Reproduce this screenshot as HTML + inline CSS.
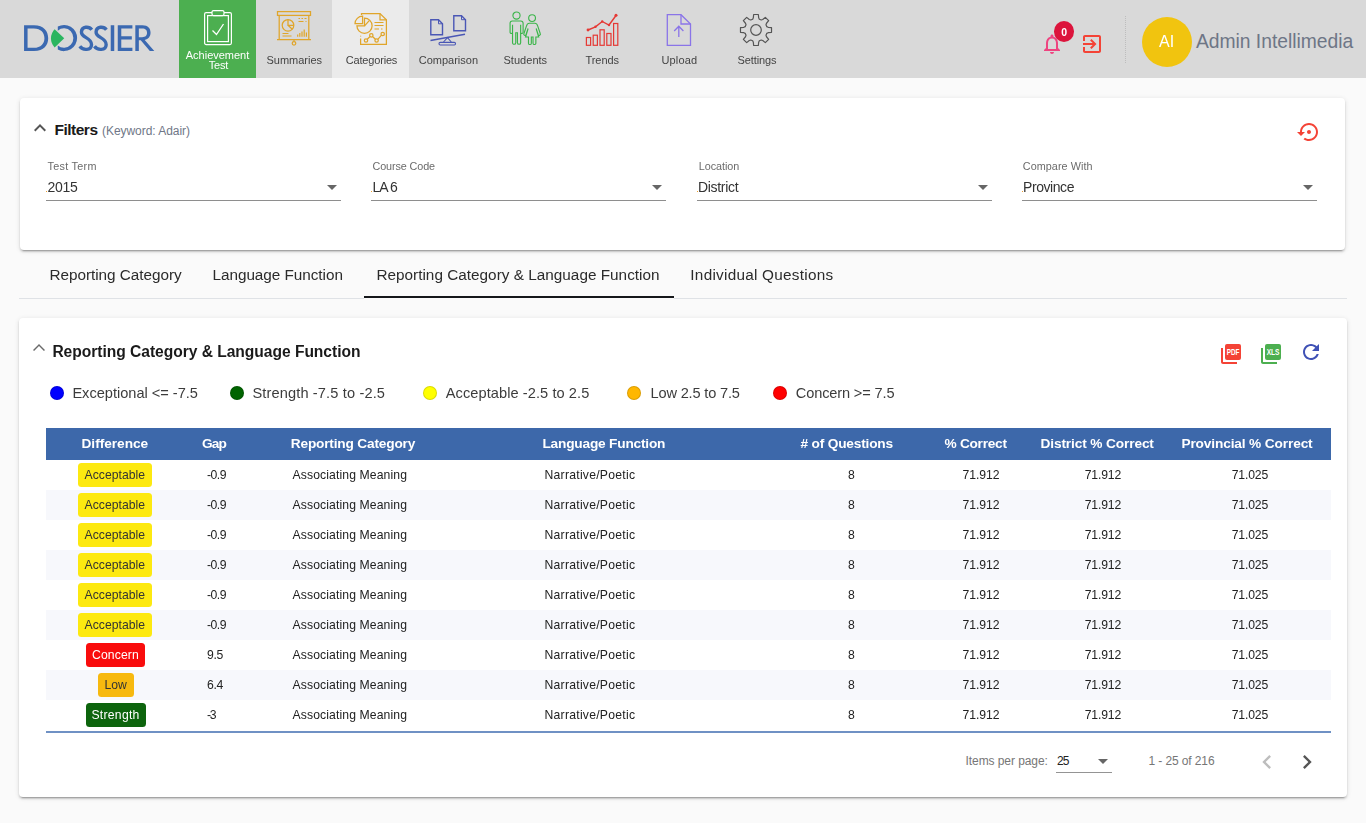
<!DOCTYPE html>
<html>
<head>
<meta charset="utf-8">
<title>Dossier</title>
<style>
*{box-sizing:border-box;margin:0;padding:0}
html,body{width:1366px;height:823px;overflow:hidden}
body{background:#fafafa;font-family:"Liberation Sans",sans-serif;color:#222;position:relative}
.abs{position:absolute}
.t{position:absolute;white-space:nowrap;line-height:1;filter:grayscale(1)}
.lcd{filter:none}
#nav{position:absolute;left:0;top:0;width:1366px;height:78px;background:#d9d9d9}
.tile{position:absolute;top:0;width:77px;height:78px}
.tile svg{position:absolute}
.card{position:absolute;background:#fff;border-radius:4px;box-shadow:0 3px 1px -2px rgba(0,0,0,.2),0 2px 2px 0 rgba(0,0,0,.14),0 1px 5px 0 rgba(0,0,0,.12)}
.fline{position:absolute;height:1px;background:#8e8e8e;width:295px;top:200px}
.farrow{position:absolute;width:0;height:0;border-left:5px solid transparent;border-right:5px solid transparent;border-top:5px solid #666;top:184.5px}
.row{position:absolute;left:46px;width:1285px;height:30px}
.row.alt{background:#f7f8fc}
.badge{position:absolute;height:24px;border-radius:3.5px}
.dot{position:absolute;width:14.5px;height:14.5px;border-radius:50%;top:385.9px;border:1px solid rgba(0,0,0,.14)}
</style>
</head>
<body>
<div id="nav">
<svg class="abs" style="left:10px;top:10px" width="160" height="60" viewBox="0 0 1366 512">
<g fill="#3b69b1">
<path fill-rule="evenodd" d="M120,130 L205,130 C290,130 326,182 326,240 C326,298 290,350 205,350 L120,350 Z M150,158 L150,322 L203,322 C265,322 294,285 294,240 C294,195 265,158 203,158 Z"/>
<rect x="860" y="130" width="30" height="220"/>
<path d="M920,130 H1045 V158 H950 V224 H1040 V252 H950 V322 H1045 V350 H920 Z"/>
<path fill-rule="evenodd" d="M1070,130 H1130 C1180,130 1200,160 1200,193 C1200,226 1182,250 1150,256 L1232,350 H1194 L1116,258 H1100 V350 H1070 Z M1100,157 V232 H1128 C1158,232 1170,215 1170,194 C1170,172 1158,157 1128,157 Z"/>
</g>
<g fill="none" stroke="#3b69b1" stroke-width="29">
<path d="M698,168 C676,138 612,136 610,188 C608,240 698,232 696,296 C694,346 622,348 596,310"/>
<path d="M823,168 C801,138 737,136 735,188 C733,240 823,232 821,296 C819,346 747,348 721,310"/>
</g>
<path fill="#3b69b1" d="M408,140.3 A112,112 0 1 1 408,337.7 L408,301.9 A80,84 0 1 0 408,176.1 Z"/>
<path fill="#2bb560" d="M463,242 L381,164 A113,113 0 0 0 381,320 Z"/>
</svg>
<div class="abs" style="left:332px;top:0;width:77px;height:78px;background:#ebebeb"></div>
<div class="tile" style="left:179px;background:#4caf50;"><svg style="left:24px;top:9px" width="30" height="37" viewBox="0 0 30 37" fill="none" stroke="#fff" stroke-width="1.2"><rect x="1.6" y="3.6" width="26.8" height="32" rx="1.5"/><rect x="4.6" y="6.6" width="20.8" height="26"/><rect x="9" y="1.6" width="12" height="5" rx="1.5" fill="#4caf50"/><path d="M9.5,21.5 L13.5,25.5 L20.5,15" stroke-width="1.3"/></svg></div>
<div class="tile" style="left:256px;"><svg style="left:19.5px;top:10px" width="36" height="36" viewBox="0 0 36 36" fill="none" stroke="#e0a52a" stroke-width="1.25"><rect x="1.5" y="1.6" width="33" height="3.8"/><path d="M3.2,5.4 V29.6 M32.8,5.4 V29.6 M1,29.6 H35 M18,29.6 V31.5"/><circle cx="18" cy="33.3" r="1.8"/><circle cx="12" cy="15.3" r="5.8"/><path d="M12,9.5 V15.3 H17.8 M12,15.3 L16.3,19.2"/><path d="M22.5,8.5 H24 M25.5,8.5 H27 M28.5,8.5 H30.5 M22.5,11.5 H27.5 M29.5,11.5 H30.5 M6.5,23.5 H12.5 M6.5,26 H15.5 M21.7,26.8 V24.5 M23.8,26.8 V23 M26,26.8 V21.5 M28.2,26.8 V19.5 M30.4,26.8 V22.5" stroke-width="1.2"/></svg></div>
<div class="tile" style="left:333px;"><svg style="left:20px;top:11px" width="36" height="36" viewBox="0 0 36 36" fill="none" stroke="#e0a52a" stroke-width="1.25"><path d="M8.5,4 V2.6 H27 L33.4,8.8 V33.4 H7.6 V27.5 M7.6,25.5 V24.8"/><path d="M27,2.6 V8.8 H33.4"/><path d="M9.6,5.2 V12.7 H2 A7.6,7.6 0 0 1 9.6,5.2 Z"/><path d="M11.5,7.2 A7.6,7.6 0 1 1 3.9,14.8 H11.5 Z"/><path d="M11.5,14.8 L16.5,9.3"/><path d="M21.5,11.5 H30.5 M21.5,14.5 H30.5 M21.5,18 H26 M28,18 H29.5" stroke-width="1.2"/><circle cx="13" cy="29.5" r="1.7"/><circle cx="18.3" cy="24.3" r="1.7"/><circle cx="23.6" cy="29.5" r="1.7"/><circle cx="29.7" cy="23" r="1.7"/><path d="M14.2,28.3 L17.1,25.5 M19.5,25.5 L22.4,28.3 M24.8,28.3 L28.5,24.2"/></svg></div>
<div class="tile" style="left:410px;"><svg style="left:18px;top:13px" width="40" height="34" viewBox="0 0 40 34" fill="none" stroke="#4a57b5" stroke-width="1.4"><path d="M2.8,6.8 H10.5 L14.5,10.8 V21.8 H2.8 Z"/><path d="M10.5,6.8 V10.8 H14.5" stroke-width="1"/><path d="M25.8,2.7 H33.5 L37.5,6.7 V17.7 H25.8 Z"/><path d="M33.5,2.7 V6.7 H37.5" stroke-width="1"/><path d="M2.5,27.5 L37,21.2"/><path d="M15.5,29 L19.5,24.6 L23.3,29" stroke-width="1.1"/><rect x="11" y="29.4" width="16.5" height="2.6" rx="1.2" stroke-width="1.1"/></svg></div>
<div class="tile" style="left:487px;"><svg style="left:20.8px;top:11.3px" width="34" height="35" viewBox="0 0 36 37" fill="none" stroke="#3bb54a" stroke-width="1.2"><circle cx="9" cy="4.8" r="3.8"/><path d="M4.5,10.5 H13.5 A2.5,2.5 0 0 1 16,13 V22.5 A1.3,1.3 0 0 1 13.4,22.5 V14.5 V33.5 A1.7,1.7 0 0 1 10,33.5 V23 H8.2 V33.5 A1.7,1.7 0 0 1 4.8,33.5 V14.5 V22.5 A1.3,1.3 0 0 1 2.2,22.5 V13 A2.5,2.5 0 0 1 4.5,10.5 Z"/><circle cx="25.5" cy="7.5" r="3.6"/><path d="M22.5,13 H28.5 C30.5,13 31,14.5 31.5,16 L34.2,24 A1.2,1.2 0 0 1 32,25 L29.8,18.5 L32.5,27.5 H29.5 V34 A1.5,1.5 0 0 1 26.5,34 V27.5 H24.7 V34 A1.5,1.5 0 0 1 21.7,34 V27.5 H18.6 L21.3,18.5 L19,25 A1.2,1.2 0 0 1 16.8,24 L19.5,16 C20,14.5 20.5,13 22.5,13 Z"/></svg></div>
<div class="tile" style="left:564px;"><svg style="left:20px;top:12px" width="36" height="35" viewBox="0 0 36 35" fill="none" stroke="#e53935" stroke-width="1.2"><rect x="2.4" y="25.5" width="4.2" height="7.8"/><rect x="9.2" y="23.2" width="4.2" height="10.1"/><rect x="16" y="17.8" width="4.2" height="15.5"/><rect x="22.8" y="21.5" width="4.2" height="11.8"/><rect x="29.6" y="11.5" width="4.2" height="21.8"/><path d="M4,18 L11.5,14.8 L18.2,9.5 L25,13 L32,3.5" stroke-width="1.4"/><g fill="#e53935" stroke="none"><circle cx="4" cy="18" r="1.4"/><circle cx="11.5" cy="14.8" r="1.2"/><circle cx="18.2" cy="9.5" r="1.2"/><circle cx="25" cy="13" r="1.2"/><circle cx="32" cy="3.3" r="1.5"/></g></svg></div>
<div class="tile" style="left:641px;"><svg style="left:24px;top:12px" width="28" height="36" viewBox="0 0 28 36" fill="none" stroke="#8a74e8" stroke-width="1.3"><path d="M2.3,2.7 H16 L25.5,12 V33.3 H2.3 Z"/><path d="M16,2.7 V12 H25.5"/><path d="M13.8,25 V14.5 M9.2,19 L13.8,14.3 L18.4,19"/></svg></div>
<div class="tile" style="left:718px;"><svg style="left:20px;top:12px" width="36" height="36" viewBox="0 0 36 36" fill="none" stroke="#555" stroke-width="1.2" stroke-linejoin="round"><path d="M14.66,7.20 L15.33,5.79 L15.65,2.48 L20.35,2.48 L20.67,5.79 L21.34,7.20 L23.27,8.01 L24.75,7.48 L27.32,5.36 L30.64,8.68 L28.52,11.25 L27.99,12.73 L28.80,14.66 L30.21,15.33 L33.52,15.65 L33.52,20.35 L30.21,20.67 L28.80,21.34 L27.99,23.27 L28.52,24.75 L30.64,27.32 L27.32,30.64 L24.75,28.52 L23.27,27.99 L21.34,28.80 L20.67,30.21 L20.35,33.52 L15.65,33.52 L15.33,30.21 L14.66,28.80 L12.73,27.99 L11.25,28.52 L8.68,30.64 L5.36,27.32 L7.48,24.75 L8.01,23.27 L7.20,21.34 L5.79,20.67 L2.48,20.35 L2.48,15.65 L5.79,15.33 L7.20,14.66 L8.01,12.73 L7.48,11.25 L5.36,8.68 L8.68,5.36 L11.25,7.48 L12.73,8.01 Z"/><circle cx="18" cy="18" r="5.3"/></svg></div>
<div class="t" style="left:185.80px;top:49.99px;font-size:11px;color:#fff;letter-spacing:-0.010px;">Achievement</div>
<div class="t" style="left:208.75px;top:60.09px;font-size:11px;color:#fff;letter-spacing:-0.217px;">Test</div>
<div class="t" style="left:266.50px;top:54.69px;font-size:11px;color:#444;letter-spacing:-0.013px;">Summaries</div>
<div class="t" style="left:345.75px;top:54.69px;font-size:11px;color:#444;letter-spacing:-0.178px;">Categories</div>
<div class="t" style="left:418.75px;top:54.69px;font-size:11px;color:#444;letter-spacing:-0.006px;">Comparison</div>
<div class="t" style="left:503.50px;top:54.69px;font-size:11px;color:#444;letter-spacing:0.029px;">Students</div>
<div class="t" style="left:585.50px;top:54.69px;font-size:11px;color:#444;letter-spacing:-0.070px;">Trends</div>
<div class="t" style="left:661.40px;top:54.69px;font-size:11px;color:#444;letter-spacing:0.190px;">Upload</div>
<div class="t" style="left:737.50px;top:54.69px;font-size:11px;color:#444;letter-spacing:-0.107px;">Settings</div>
<svg class="abs" style="left:1040.3px;top:32.1px" width="24" height="24" viewBox="0 0 24 24" fill="#ee4480"><path d="M12 22c1.100 0 2-.9 2-2h-4c0 1.100.9 2 2 2zm6-6v-5c0-3.070-1.630-5.640-4.500-6.320V4c0-.830-.670-1.500-1.500-1.500s-1.500.670-1.500 1.500v.680C7.640 5.360 6 7.920 6 11v5l-2 2v1h16v-1l-2-2zm-2 1H8v-6c0-2.480 1.510-4.500 4-4.500s4 2.020 4 4.500v6z"/></svg>
<div class="abs" style="left:1054px;top:21px;width:20px;height:20.5px;border-radius:50%;background:#dc143c"></div>
<div class="t" style="left:1061.20px;top:27.01px;font-size:10.5px;color:#fff;letter-spacing:0.000px;font-weight:bold;">0</div>
<svg class="abs" style="left:1080.3px;top:31.9px" width="24" height="24" viewBox="0 0 24 24" fill="#f44336"><path d="M10.09 15.59L11.5 17l5-5-5-5-1.41 1.41L12.67 11H3v2h9.670l-2.580 2.590zM19 3H5c-1.110 0-2 .9-2 2v4h2V5h14v14H5v-4H3v4c0 1.100.890 2 2 2h14c1.100 0 2-.9 2-2V5c0-1.100-.9-2-2-2z"/></svg>
<div class="abs" style="left:1124.5px;top:16px;width:0;height:47px;border-left:1px dotted #bdbdbd"></div>
<div class="abs" style="left:1142px;top:17px;width:50px;height:50px;border-radius:50%;background:#f1c40f"></div>
<div class="t" style="left:1159.04px;top:34.16px;font-size:16px;color:#fff;letter-spacing:0.100px;">AI</div>
<div class="t lcd" style="left:1195.88px;top:32.16px;font-size:19.3px;color:#6e7686;letter-spacing:-0.006px;">Admin Intellimedia</div>
</div>
<div class="card" style="left:20px;top:98px;width:1325px;height:152px"></div>
<svg class="abs" style="left:28px;top:116px" width="24" height="24" viewBox="0 0 24 24" fill="#555"><path d="M12 8l-6 6 1.410 1.410L12 10.830l4.590 4.580L18 14z"/></svg>
<div class="t lcd" style="left:54.40px;top:121.68px;font-size:15.5px;color:#1a1a1a;letter-spacing:-0.483px;font-weight:bold;">Filters</div>
<div class="t lcd" style="left:102.00px;top:124.64px;font-size:12px;color:#6f7787;letter-spacing:-0.047px;">(Keyword: Adair)</div>
<svg class="abs" style="left:1296.9px;top:119.9px" width="24" height="24" viewBox="0 0 24 24" fill="#f44336"><path d="M14,12c0-1.100-0.900-2-2-2s-2,0.900-2,2s0.900,2,2,2S14,13.100,14,12z M12,3c-4.970,0-9,4.030-9,9H0l4,4l4-4H5c0-3.870,3.130-7,7-7s7,3.130,7,7s-3.130,7-7,7c-1.510,0-2.910-0.490-4.060-1.300l-1.420,1.440C8.040,20.300,9.940,21,12,21c4.970,0,9-4.030,9-9S16.970,3,12,3z"/></svg>
<div class="t" style="left:47.50px;top:160.66px;font-size:10.8px;color:#6b6b6b;letter-spacing:0.300px;">Test Term</div>
<div class="t" style="left:47.40px;top:180.45px;font-size:14px;color:#333;letter-spacing:-0.250px;">2015</div>
<div class="fline" style="left:46px"></div><div class="farrow" style="left:326.9px"></div>
<div class="abs" style="left:46.3px;top:191px;width:1.2px;height:1.2px;background:#f0a030"></div>
<div class="t" style="left:372.50px;top:160.66px;font-size:10.8px;color:#6b6b6b;letter-spacing:-0.105px;">Course Code</div>
<div class="t" style="left:372.40px;top:180.45px;font-size:14px;color:#333;letter-spacing:-0.883px;">LA 6</div>
<div class="fline" style="left:371px"></div><div class="farrow" style="left:651.9px"></div>
<div class="abs" style="left:371.3px;top:191px;width:1.2px;height:1.2px;background:#f0a030"></div>
<div class="t" style="left:698.75px;top:160.66px;font-size:10.8px;color:#6b6b6b;letter-spacing:-0.050px;">Location</div>
<div class="t" style="left:698.00px;top:180.45px;font-size:14px;color:#333;letter-spacing:-0.321px;">District</div>
<div class="fline" style="left:697px"></div><div class="farrow" style="left:978.0px"></div>
<div class="abs" style="left:697.3px;top:191px;width:1.2px;height:1.2px;background:#f0a030"></div>
<div class="t" style="left:1022.80px;top:160.66px;font-size:10.8px;color:#6b6b6b;letter-spacing:0.068px;">Compare With</div>
<div class="t" style="left:1023.00px;top:180.45px;font-size:14px;color:#333;letter-spacing:-0.436px;">Province</div>
<div class="fline" style="left:1022px"></div><div class="farrow" style="left:1303.0px"></div>
<div class="abs" style="left:1022.3px;top:191px;width:1.2px;height:1.2px;background:#f0a030"></div>
<div class="abs" style="left:19px;top:298px;width:1328px;height:1px;background:#dfe2e6"></div>
<div class="t" style="left:49.50px;top:267.25px;font-size:15.3px;color:#2b2b2b;letter-spacing:-0.029px;">Reporting Category</div>
<div class="t" style="left:212.50px;top:267.25px;font-size:15.3px;color:#2b2b2b;letter-spacing:-0.037px;">Language Function</div>
<div class="t" style="left:376.40px;top:267.25px;font-size:15.3px;color:#2b2b2b;letter-spacing:0.022px;">Reporting Category &amp; Language Function</div>
<div class="t" style="left:690.35px;top:267.25px;font-size:15.3px;color:#2b2b2b;letter-spacing:0.263px;">Individual Questions</div>
<div class="abs" style="left:364px;top:296px;width:310px;height:3px;background:#fafafa"></div><div class="abs" style="left:364px;top:296px;width:310px;height:2px;background:#15171a"></div>
<div class="card" style="left:19px;top:318px;width:1328px;height:479px"></div>
<svg class="abs" style="left:27px;top:336px" width="24" height="24" viewBox="0 0 24 24" fill="#6a6a6a"><path d="M12 8l-6 6 1.060 1.060L12 10.120l4.940 4.940L18 14z"/></svg>
<div class="t" style="left:52.40px;top:344.19px;font-size:15.6px;color:#1a1a1a;letter-spacing:-0.032px;font-weight:bold;">Reporting Category &amp; Language Function</div>
<div class="dot" style="left:49.6px;background:#0000ff"></div><div class="t" style="left:72.40px;top:386.04px;font-size:14.6px;color:#3c3c3c;letter-spacing:-0.011px;">Exceptional &lt;= -7.5</div>
<div class="dot" style="left:229.8px;background:#006400"></div><div class="t" style="left:252.40px;top:386.04px;font-size:14.6px;color:#3c3c3c;letter-spacing:0.138px;">Strength -7.5 to -2.5</div>
<div class="dot" style="left:422.6px;background:#ffff00"></div><div class="t" style="left:445.75px;top:386.04px;font-size:14.6px;color:#3c3c3c;letter-spacing:0.074px;">Acceptable -2.5 to 2.5</div>
<div class="dot" style="left:626.5px;background:#ffb700"></div><div class="t" style="left:650.50px;top:386.04px;font-size:14.6px;color:#3c3c3c;letter-spacing:-0.169px;">Low 2.5 to 7.5</div>
<div class="dot" style="left:772.9px;background:#ff0000"></div><div class="t" style="left:795.80px;top:386.04px;font-size:14.6px;color:#3c3c3c;letter-spacing:-0.146px;">Concern &gt;= 7.5</div>
<svg class="abs" style="left:1219px;top:342px" width="24" height="24" viewBox="0 0 24 24"><path d="M4 6H2v14c0 1.100.9 2 2 2h14v-2H4V6z" fill="#f44336"/><rect x="6" y="2" width="16" height="16" rx="2" fill="#f44336"/><text x="14.1" y="13.100" font-family="Liberation Sans, sans-serif" font-weight="bold" font-size="8.8" fill="#fff" text-anchor="middle" textLength="12.800" lengthAdjust="spacingAndGlyphs">PDF</text></svg>
<svg class="abs" style="left:1259px;top:342px" width="24" height="24" viewBox="0 0 24 24"><path d="M4 6H2v14c0 1.100.9 2 2 2h14v-2H4V6z" fill="#4caf50"/><rect x="6" y="2" width="16" height="16" rx="2" fill="#4caf50"/><text x="14.1" y="13.100" font-family="Liberation Sans, sans-serif" font-weight="bold" font-size="8.8" fill="#fff" text-anchor="middle" textLength="12.800" lengthAdjust="spacingAndGlyphs">XLS</text></svg>
<svg class="abs" style="left:1299px;top:340px" width="24" height="24" viewBox="0 0 24 24" fill="#3f51b5"><path d="M17.650,6.350C16.200,4.900,14.210,4,12,4c-4.420,0-7.990,3.580-7.990,8s3.570,8,7.990,8c3.730,0,6.840-2.550,7.730-6h-2.080c-0.820,2.330-3.040,4-5.650,4c-3.310,0-6-2.690-6-6s2.690-6,6-6c1.660,0,3.140,0.690,4.220,1.780L13,11h7V4L17.650,6.350z"/></svg>
<div class="abs" style="left:46px;top:428px;width:1285.3px;height:32px;background:#3d68aa"></div>
<div class="t" style="left:81.50px;top:436.90px;font-size:13.7px;color:#fff;letter-spacing:-0.028px;font-weight:bold;">Difference</div>
<div class="t" style="left:202.00px;top:436.90px;font-size:13.7px;color:#fff;letter-spacing:-0.825px;font-weight:bold;">Gap</div>
<div class="t" style="left:290.75px;top:436.90px;font-size:13.7px;color:#fff;letter-spacing:-0.185px;font-weight:bold;">Reporting Category</div>
<div class="t" style="left:542.40px;top:436.90px;font-size:13.7px;color:#fff;letter-spacing:-0.197px;font-weight:bold;">Language Function</div>
<div class="t" style="left:800.50px;top:436.90px;font-size:13.7px;color:#fff;letter-spacing:-0.185px;font-weight:bold;"># of Questions</div>
<div class="t" style="left:944.50px;top:436.90px;font-size:13.7px;color:#fff;letter-spacing:-0.275px;font-weight:bold;">% Correct</div>
<div class="t" style="left:1040.50px;top:436.90px;font-size:13.7px;color:#fff;letter-spacing:-0.129px;font-weight:bold;">District % Correct</div>
<div class="t" style="left:1181.40px;top:436.90px;font-size:13.7px;color:#fff;letter-spacing:-0.137px;font-weight:bold;">Provincial % Correct</div>
<div class="badge" style="left:78px;top:463px;width:74px;background:#fde910"></div>
<div class="t" style="left:84.50px;top:468.67px;font-size:12.2px;color:#333;letter-spacing:0.028px;">Acceptable</div>
<div class="t" style="left:207.00px;top:468.67px;font-size:12.2px;color:#222;letter-spacing:-0.500px;">-0.9</div>
<div class="t" style="left:292.50px;top:468.67px;font-size:12.2px;color:#222;letter-spacing:0.111px;">Associating Meaning</div>
<div class="t" style="left:544.50px;top:468.67px;font-size:12.2px;color:#222;letter-spacing:0.253px;">Narrative/Poetic</div>
<div class="t" style="left:848.00px;top:468.67px;font-size:12.2px;color:#222;letter-spacing:0.000px;">8</div>
<div class="t" style="left:962.50px;top:468.67px;font-size:12.2px;color:#222;letter-spacing:-0.060px;">71.912</div>
<div class="t" style="left:1084.75px;top:468.67px;font-size:12.2px;color:#222;letter-spacing:-0.160px;">71.912</div>
<div class="t" style="left:1231.75px;top:468.67px;font-size:12.2px;color:#222;letter-spacing:-0.160px;">71.025</div>
<div class="row alt" style="top:490px"></div>
<div class="badge" style="left:78px;top:493px;width:74px;background:#fde910"></div>
<div class="t" style="left:84.50px;top:498.67px;font-size:12.2px;color:#333;letter-spacing:0.028px;">Acceptable</div>
<div class="t" style="left:207.00px;top:498.67px;font-size:12.2px;color:#222;letter-spacing:-0.500px;">-0.9</div>
<div class="t" style="left:292.50px;top:498.67px;font-size:12.2px;color:#222;letter-spacing:0.111px;">Associating Meaning</div>
<div class="t" style="left:544.50px;top:498.67px;font-size:12.2px;color:#222;letter-spacing:0.253px;">Narrative/Poetic</div>
<div class="t" style="left:848.00px;top:498.67px;font-size:12.2px;color:#222;letter-spacing:0.000px;">8</div>
<div class="t" style="left:962.50px;top:498.67px;font-size:12.2px;color:#222;letter-spacing:-0.060px;">71.912</div>
<div class="t" style="left:1084.75px;top:498.67px;font-size:12.2px;color:#222;letter-spacing:-0.160px;">71.912</div>
<div class="t" style="left:1231.75px;top:498.67px;font-size:12.2px;color:#222;letter-spacing:-0.160px;">71.025</div>
<div class="badge" style="left:78px;top:523px;width:74px;background:#fde910"></div>
<div class="t" style="left:84.50px;top:528.67px;font-size:12.2px;color:#333;letter-spacing:0.028px;">Acceptable</div>
<div class="t" style="left:207.00px;top:528.67px;font-size:12.2px;color:#222;letter-spacing:-0.500px;">-0.9</div>
<div class="t" style="left:292.50px;top:528.67px;font-size:12.2px;color:#222;letter-spacing:0.111px;">Associating Meaning</div>
<div class="t" style="left:544.50px;top:528.67px;font-size:12.2px;color:#222;letter-spacing:0.253px;">Narrative/Poetic</div>
<div class="t" style="left:848.00px;top:528.67px;font-size:12.2px;color:#222;letter-spacing:0.000px;">8</div>
<div class="t" style="left:962.50px;top:528.67px;font-size:12.2px;color:#222;letter-spacing:-0.060px;">71.912</div>
<div class="t" style="left:1084.75px;top:528.67px;font-size:12.2px;color:#222;letter-spacing:-0.160px;">71.912</div>
<div class="t" style="left:1231.75px;top:528.67px;font-size:12.2px;color:#222;letter-spacing:-0.160px;">71.025</div>
<div class="row alt" style="top:550px"></div>
<div class="badge" style="left:78px;top:553px;width:74px;background:#fde910"></div>
<div class="t" style="left:84.50px;top:558.67px;font-size:12.2px;color:#333;letter-spacing:0.028px;">Acceptable</div>
<div class="t" style="left:207.00px;top:558.67px;font-size:12.2px;color:#222;letter-spacing:-0.500px;">-0.9</div>
<div class="t" style="left:292.50px;top:558.67px;font-size:12.2px;color:#222;letter-spacing:0.111px;">Associating Meaning</div>
<div class="t" style="left:544.50px;top:558.67px;font-size:12.2px;color:#222;letter-spacing:0.253px;">Narrative/Poetic</div>
<div class="t" style="left:848.00px;top:558.67px;font-size:12.2px;color:#222;letter-spacing:0.000px;">8</div>
<div class="t" style="left:962.50px;top:558.67px;font-size:12.2px;color:#222;letter-spacing:-0.060px;">71.912</div>
<div class="t" style="left:1084.75px;top:558.67px;font-size:12.2px;color:#222;letter-spacing:-0.160px;">71.912</div>
<div class="t" style="left:1231.75px;top:558.67px;font-size:12.2px;color:#222;letter-spacing:-0.160px;">71.025</div>
<div class="badge" style="left:78px;top:583px;width:74px;background:#fde910"></div>
<div class="t" style="left:84.50px;top:588.67px;font-size:12.2px;color:#333;letter-spacing:0.028px;">Acceptable</div>
<div class="t" style="left:207.00px;top:588.67px;font-size:12.2px;color:#222;letter-spacing:-0.500px;">-0.9</div>
<div class="t" style="left:292.50px;top:588.67px;font-size:12.2px;color:#222;letter-spacing:0.111px;">Associating Meaning</div>
<div class="t" style="left:544.50px;top:588.67px;font-size:12.2px;color:#222;letter-spacing:0.253px;">Narrative/Poetic</div>
<div class="t" style="left:848.00px;top:588.67px;font-size:12.2px;color:#222;letter-spacing:0.000px;">8</div>
<div class="t" style="left:962.50px;top:588.67px;font-size:12.2px;color:#222;letter-spacing:-0.060px;">71.912</div>
<div class="t" style="left:1084.75px;top:588.67px;font-size:12.2px;color:#222;letter-spacing:-0.160px;">71.912</div>
<div class="t" style="left:1231.75px;top:588.67px;font-size:12.2px;color:#222;letter-spacing:-0.160px;">71.025</div>
<div class="row alt" style="top:610px"></div>
<div class="badge" style="left:78px;top:613px;width:74px;background:#fde910"></div>
<div class="t" style="left:84.50px;top:618.67px;font-size:12.2px;color:#333;letter-spacing:0.028px;">Acceptable</div>
<div class="t" style="left:207.00px;top:618.67px;font-size:12.2px;color:#222;letter-spacing:-0.500px;">-0.9</div>
<div class="t" style="left:292.50px;top:618.67px;font-size:12.2px;color:#222;letter-spacing:0.111px;">Associating Meaning</div>
<div class="t" style="left:544.50px;top:618.67px;font-size:12.2px;color:#222;letter-spacing:0.253px;">Narrative/Poetic</div>
<div class="t" style="left:848.00px;top:618.67px;font-size:12.2px;color:#222;letter-spacing:0.000px;">8</div>
<div class="t" style="left:962.50px;top:618.67px;font-size:12.2px;color:#222;letter-spacing:-0.060px;">71.912</div>
<div class="t" style="left:1084.75px;top:618.67px;font-size:12.2px;color:#222;letter-spacing:-0.160px;">71.912</div>
<div class="t" style="left:1231.75px;top:618.67px;font-size:12.2px;color:#222;letter-spacing:-0.160px;">71.025</div>
<div class="badge" style="left:86px;top:643px;width:59px;background:#f90d0d"></div>
<div class="t" style="left:92.00px;top:648.67px;font-size:12.2px;color:#fff;letter-spacing:0.108px;">Concern</div>
<div class="t" style="left:207.00px;top:648.67px;font-size:12.2px;color:#222;letter-spacing:-0.350px;">9.5</div>
<div class="t" style="left:292.50px;top:648.67px;font-size:12.2px;color:#222;letter-spacing:0.111px;">Associating Meaning</div>
<div class="t" style="left:544.50px;top:648.67px;font-size:12.2px;color:#222;letter-spacing:0.253px;">Narrative/Poetic</div>
<div class="t" style="left:848.00px;top:648.67px;font-size:12.2px;color:#222;letter-spacing:0.000px;">8</div>
<div class="t" style="left:962.50px;top:648.67px;font-size:12.2px;color:#222;letter-spacing:-0.060px;">71.912</div>
<div class="t" style="left:1084.75px;top:648.67px;font-size:12.2px;color:#222;letter-spacing:-0.160px;">71.912</div>
<div class="t" style="left:1231.75px;top:648.67px;font-size:12.2px;color:#222;letter-spacing:-0.160px;">71.025</div>
<div class="row alt" style="top:670px"></div>
<div class="badge" style="left:98px;top:673px;width:36px;background:#f7b90f"></div>
<div class="t" style="left:104.50px;top:678.67px;font-size:12.2px;color:#333;letter-spacing:-0.075px;">Low</div>
<div class="t" style="left:207.00px;top:678.67px;font-size:12.2px;color:#222;letter-spacing:-0.350px;">6.4</div>
<div class="t" style="left:292.50px;top:678.67px;font-size:12.2px;color:#222;letter-spacing:0.111px;">Associating Meaning</div>
<div class="t" style="left:544.50px;top:678.67px;font-size:12.2px;color:#222;letter-spacing:0.253px;">Narrative/Poetic</div>
<div class="t" style="left:848.00px;top:678.67px;font-size:12.2px;color:#222;letter-spacing:0.000px;">8</div>
<div class="t" style="left:962.50px;top:678.67px;font-size:12.2px;color:#222;letter-spacing:-0.060px;">71.912</div>
<div class="t" style="left:1084.75px;top:678.67px;font-size:12.2px;color:#222;letter-spacing:-0.160px;">71.912</div>
<div class="t" style="left:1231.75px;top:678.67px;font-size:12.2px;color:#222;letter-spacing:-0.160px;">71.025</div>
<div class="badge" style="left:86px;top:703px;width:60.25px;background:#0d640d"></div>
<div class="t" style="left:91.40px;top:708.67px;font-size:12.2px;color:#fff;letter-spacing:0.271px;">Strength</div>
<div class="t" style="left:207.00px;top:708.67px;font-size:12.2px;color:#222;letter-spacing:-1.350px;">-3</div>
<div class="t" style="left:292.50px;top:708.67px;font-size:12.2px;color:#222;letter-spacing:0.111px;">Associating Meaning</div>
<div class="t" style="left:544.50px;top:708.67px;font-size:12.2px;color:#222;letter-spacing:0.253px;">Narrative/Poetic</div>
<div class="t" style="left:848.00px;top:708.67px;font-size:12.2px;color:#222;letter-spacing:0.000px;">8</div>
<div class="t" style="left:962.50px;top:708.67px;font-size:12.2px;color:#222;letter-spacing:-0.060px;">71.912</div>
<div class="t" style="left:1084.75px;top:708.67px;font-size:12.2px;color:#222;letter-spacing:-0.160px;">71.912</div>
<div class="t" style="left:1231.75px;top:708.67px;font-size:12.2px;color:#222;letter-spacing:-0.160px;">71.025</div>
<div class="abs" style="left:46px;top:730.5px;width:1285.3px;height:2px;background:#6f91c4"></div>
<div class="t lcd" style="left:965.56px;top:754.94px;font-size:12px;color:#767676;letter-spacing:-0.074px;">Items per page:</div>
<div class="t lcd" style="left:1056.90px;top:754.94px;font-size:12px;color:#222;letter-spacing:-0.750px;">25</div>
<div class="abs" style="left:1056px;top:771.5px;width:56px;height:1px;background:#949494"></div>
<div class="abs" style="left:1098px;top:758.800px;width:0;height:0;border-left:5px solid transparent;border-right:5px solid transparent;border-top:5px solid #666"></div>
<div class="t lcd" style="left:1148.56px;top:754.94px;font-size:12px;color:#767676;letter-spacing:-0.110px;">1 - 25 of 216</div>
<svg class="abs" style="left:1253.4px;top:748.1px" width="28" height="28" viewBox="0 0 24 24" fill="#bdbdbd"><path d="M15.410,7.410L14,6l-6,6l6,6l1.410-1.410L10.830,12z"/></svg>
<svg class="abs" style="left:1293.4px;top:748.1px" width="28" height="28" viewBox="0 0 24 24" fill="#555"><path d="M10,6L8.590,7.410L13.170,12l-4.580,4.590L10,18l6-6z"/></svg>
</body>
</html>
